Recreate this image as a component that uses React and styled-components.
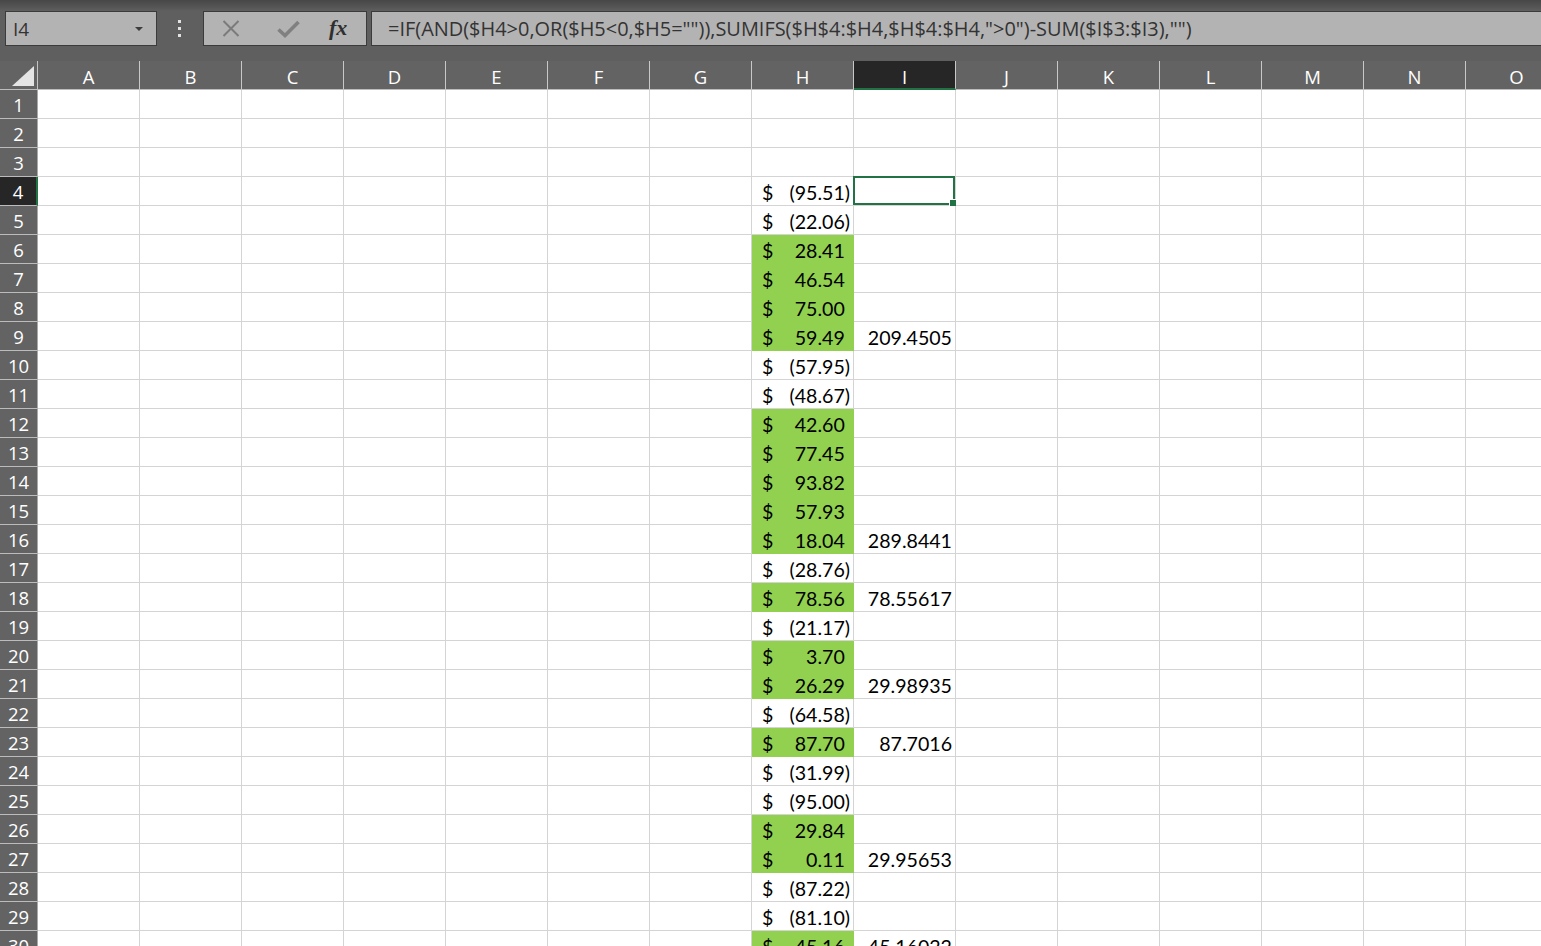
import React from 'react';
import styled, { createGlobalStyle } from 'styled-components';

const GlobalStyle = createGlobalStyle`
  html, body { margin: 0; padding: 0; background: #ffffff; overflow: hidden; }
  body { font-family: "Open Sans", "Noto Sans", sans-serif; }
  * { box-sizing: border-box; }
`;

const COLS = ['A','B','C','D','E','F','G','H','I','J','K','L','M','N','O'];
const SEL_COL = 'I';
const SEL_ROW = 4;

const DATA = {
  4: { h: -95.51 }, 5: { h: -22.06 }, 6: { h: 28.41 }, 7: { h: 46.54 }, 8: { h: 75.0 },
  9: { h: 59.49, i: '209.4505' }, 10: { h: -57.95 }, 11: { h: -48.67 }, 12: { h: 42.6 },
  13: { h: 77.45 }, 14: { h: 93.82 }, 15: { h: 57.93 }, 16: { h: 18.04, i: '289.8441' },
  17: { h: -28.76 }, 18: { h: 78.56, i: '78.55617' }, 19: { h: -21.17 }, 20: { h: 3.7 },
  21: { h: 26.29, i: '29.98935' }, 22: { h: -64.58 }, 23: { h: 87.7, i: '87.7016' },
  24: { h: -31.99 }, 25: { h: -95.0 }, 26: { h: 29.84 }, 27: { h: 0.11, i: '29.95653' },
  28: { h: -87.22 }, 29: { h: -81.1 }, 30: { h: 45.16, i: '45.16022' },
};

const Window = styled.div`
  width: 1541px;
  height: 946px;
  overflow: hidden;
  background: #ffffff;
  display: flex;
  flex-direction: column;
`;

const FormulaBar = styled.div`
  flex-shrink: 0;
  display: flex;
  align-items: stretch;
  height: 61px;
  padding: 11px 0 15px 5px;
  background: linear-gradient(#474747 0px, #575757 8px, #5f5f5f 11px, #5f5f5f 100%);
`;

const Box = styled.div`
  display: flex;
  align-items: center;
  background: #b3b3b3;
  border: 1px solid #3b3b3b;
  color: #333333;
`;

const NameBox = styled(Box)`
  width: 152px;
  justify-content: space-between;
  padding: 0 13px 0 7px;
  font-size: 19px;
`;

const Caret = styled.span`
  width: 0;
  height: 0;
  border-left: 4px solid transparent;
  border-right: 4px solid transparent;
  border-top: 4px solid #3d3d3d;
  margin-top: 1px;
`;

const Dots = styled.div`
  width: 46px;
  display: flex;
  flex-direction: column;
  align-items: center;
  justify-content: center;
  gap: 4px;
  padding-right: 1px;
`;

const Dot = styled.span`
  width: 3px;
  height: 3px;
  background: #e2e2e2;
`;

const ButtonGroup = styled(Box)`
  width: 164px;
  padding-left: 18px;
  gap: 0;
`;

const IconSlot = styled.span`
  width: ${p => p.$w}px;
  display: flex;
  align-items: center;
`;

const Fx = styled.span`
  font-family: "Liberation Serif", "DejaVu Serif", serif;
  font-style: italic;
  font-weight: bold;
  font-size: 22px;
  color: #2f2f2f;
  margin-top: -2px;
  margin-left: -4px;
`;

const FormulaInput = styled(Box)`
  flex: 1;
  margin-left: 4px;
  margin-right: -4px;
  padding-left: 16px;
  font-size: 19.95px;
  white-space: nowrap;
  overflow: hidden;
`;

const Sheet = styled.div`
  display: grid;
  grid-template-columns: 38px repeat(15, 102px);
  grid-auto-rows: 29px;
  width: 1568px;
`;

const HeadBase = styled.div`
  display: flex;
  align-items: center;
  justify-content: center;
  color: #ffffff;
  font-family: "Open Sans", "Noto Sans", sans-serif;
  font-size: 18.5px;
  background: ${p => (p.$active ? '#262626' : '#636363')};
`;

const Corner = styled(HeadBase)`
  border-right: 1px solid #c4c4c4;
  border-bottom: 1px solid #bdbdbd;
  justify-content: flex-end;
  align-items: flex-end;
  padding: 0 3px 3px 0;
`;

const ColHead = styled(HeadBase)`
  border-right: 1px solid #c8c8c8;
  border-bottom: ${p => (p.$active ? '2px solid #217346' : '1px solid #bdbdbd')};
  padding-top: ${p => (p.$active ? '3px' : '2px')};
`;

const RowHead = styled(HeadBase)`
  border-bottom: 1px solid #bcbcbc;
  border-right: ${p => (p.$active ? '2px solid #217346' : '1px solid #a9a9a9')};
  padding-top: 1px;
`;

const Cell = styled.div`
  position: relative;
  display: flex;
  align-items: center;
  padding-top: 2px;
  font-family: "Lato", "Open Sans", sans-serif;
  font-size: 19.6px;
  color: #000000;
  white-space: nowrap;
  background: ${p => (p.$fill ? '#92d050' : '#ffffff')};
  border-right: 1px solid ${p => (p.$fill ? '#92d050' : '#d4d4d4')};
  border-bottom: 1px solid ${p => (p.$fill ? '#92d050' : '#d4d4d4')};
`;

const Accounting = styled(Cell)`
  justify-content: space-between;
  padding-left: 10px;
  padding-right: 3px;
`;

const NumberCell = styled(Cell)`
  justify-content: flex-end;
  padding-right: 3px;
`;

const Paren = styled.span`
  visibility: ${p => (p.$hidden ? 'hidden' : 'visible')};
`;

const Selection = styled.span`
  position: absolute;
  top: -1px;
  left: -1px;
  right: 0;
  bottom: 0;
  border: 2px solid #217346;
  pointer-events: none;
`;

const Handle = styled.span`
  position: absolute;
  right: -3px;
  bottom: -3px;
  width: 6px;
  height: 6px;
  background: #217346;
  border-left: 1px solid #ffffff;
  border-top: 1px solid #ffffff;
  box-sizing: content-box;
`;

const XIcon = () => (
  <svg width="18" height="17" viewBox="0 0 18 17">
    <path d="M1.5 1 L16.5 16 M16.5 1 L1.5 16" stroke="#7b7b7b" strokeWidth="2" fill="none" />
  </svg>
);

const CheckIcon = () => (
  <svg width="23" height="18" viewBox="0 0 23 18">
    <path d="M1.5 9.5 L8 15.5 L21.5 2" stroke="#808080" strokeWidth="3.6" fill="none" strokeLinejoin="miter" />
  </svg>
);

const Triangle = () => (
  <svg width="22" height="20" viewBox="0 0 22 20">
    <polygon points="22,0 22,20 0,20" fill="#e4e4e4" />
  </svg>
);

const fmt = v => Math.abs(v).toFixed(2);

function DataCell({ col, row }) {
  const d = DATA[row];
  const selected = col === SEL_COL && row === SEL_ROW;
  if (col === 'H' && d && d.h !== undefined) {
    const neg = d.h < 0;
    return (
      <Accounting $fill={!neg}>
        <span>$</span>
        <span>
          <Paren $hidden={!neg}>(</Paren>
          {fmt(d.h)}
          <Paren $hidden={!neg}>)</Paren>
        </span>
      </Accounting>
    );
  }
  if (col === 'I' && d && d.i) {
    return <NumberCell>{d.i}</NumberCell>;
  }
  return (
    <Cell>
      {selected && (
        <Selection>
          <Handle />
        </Selection>
      )}
    </Cell>
  );
}

export default function App() {
  const rows = Array.from({ length: 30 }, (_, i) => i + 1);
  return (
    <Window>
      <GlobalStyle />
      <FormulaBar>
        <NameBox>
          <span>I4</span>
          <Caret />
        </NameBox>
        <Dots>
          <Dot />
          <Dot />
          <Dot />
        </Dots>
        <ButtonGroup>
          <IconSlot $w={55}><XIcon /></IconSlot>
          <IconSlot $w={56}><CheckIcon /></IconSlot>
          <IconSlot $w={30}><Fx>fx</Fx></IconSlot>
        </ButtonGroup>
        <FormulaInput>{'=IF(AND($H4>0,OR($H5<0,$H5="")),SUMIFS($H$4:$H4,$H$4:$H4,">0")-SUM($I$3:$I3),"")'}</FormulaInput>
      </FormulaBar>
      <Sheet>
        <Corner><Triangle /></Corner>
        {COLS.map(c => (
          <ColHead key={c} $active={c === SEL_COL}>{c}</ColHead>
        ))}
        {rows.map(r => (
          <React.Fragment key={r}>
            <RowHead $active={r === SEL_ROW}>{r}</RowHead>
            {COLS.map(c => (
              <DataCell key={c + r} col={c} row={r} />
            ))}
          </React.Fragment>
        ))}
      </Sheet>
    </Window>
  );
}
